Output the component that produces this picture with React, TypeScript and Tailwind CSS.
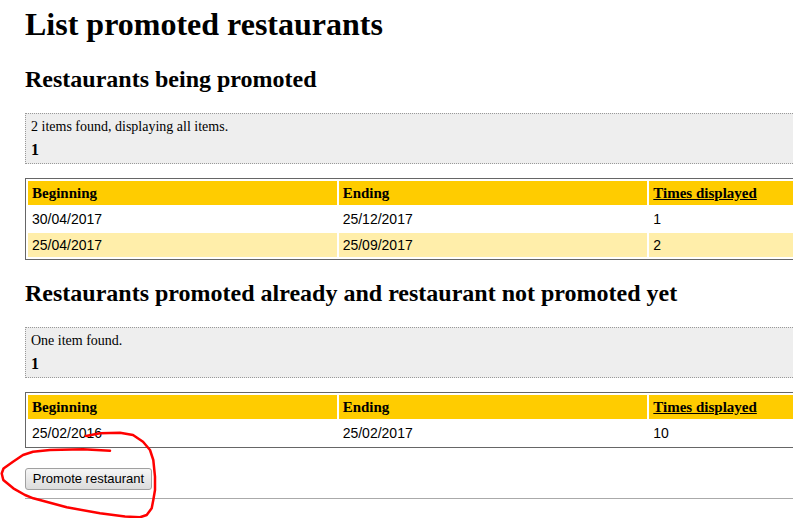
const serif = { fontFamily: '"Liberation Serif", "Times New Roman", serif' };

const promoted = [
  { beginning: "30/04/2017", ending: "25/12/2017", times: 1 },
  { beginning: "25/04/2017", ending: "25/09/2017", times: 2 },
];

const others = [{ beginning: "25/02/2016", ending: "25/02/2017", times: 10 }];

const circle = [
  [110, 450.7], [83, 449.3], [50, 450], [33, 451.7], [23, 455], [13, 461.7], [3.5, 468.5],
  [1.7, 473.5], [3.3, 480], [13.3, 488.3], [25, 495], [33.3, 498.3], [66.7, 507.3],
  [100, 513.3], [125, 516.5], [140, 517.3], [146.7, 515], [151.7, 508.3], [153.3, 500],
  [155, 490], [155, 476.7], [153.3, 460], [150, 450], [143, 441.7], [133, 435],
  [120, 432.7], [100, 433.3], [86, 436],
];

function Pager({ text }: { text: string }) {
  return (
    <div className="mt-[20px] h-[51px] border border-dotted border-[#999] bg-[#eeeeee] pl-[5px] pt-[4px] text-black">
      <p className="text-[14px] leading-[18px]">{text}</p>
      <p className="mt-[5px] text-[16px] font-bold leading-[18px]">1</p>
    </div>
  );
}

function PromoTable({ rows }: { rows: typeof promoted }) {
  return (
    <table className="mt-[14px] w-[936px] table-fixed border-separate border-spacing-[2px] border border-[#666]">
      <thead>
        <tr className="h-[24px]">
          <th className="w-[308px] bg-[#ffcc00] px-[4px] py-0 text-left text-[15px] font-bold" style={serif}>Beginning</th>
          <th className="w-[308px] bg-[#ffcc00] px-[4px] py-0 text-left text-[15px] font-bold" style={serif}>Ending</th>
          <th className="w-[308px] bg-[#ffcc00] px-[4px] py-0 text-left text-[15px] font-bold" style={serif}>
            <a className="text-black underline">Times displayed</a>
          </th>
        </tr>
      </thead>
      <tbody className="font-['Liberation_Sans',Arial,sans-serif] text-[14px]">
        {rows.map((r, i) => (
          <tr key={r.beginning} className={`h-[24px] ${i % 2 === 1 ? "bg-[#ffeeaa]" : "bg-white"}`}>
            <td className="px-[4px] py-0">{r.beginning}</td>
            <td className="px-[4px] py-0">{r.ending}</td>
            <td className="px-[4px] py-0">{r.times}</td>
          </tr>
        ))}
      </tbody>
    </table>
  );
}

export default function App() {
  const d = circle.map((p, i) => `${i === 0 ? "M" : "L"}${p[0]} ${p[1]}`).join(" ");

  return (
    <div className="relative h-[518px] w-[793px] overflow-hidden bg-white text-black" style={serif}>
      <div className="w-[961px] pl-[25px] pt-[6px]">
        <h1 className="m-0 text-[32px] font-bold leading-[37px]">List promoted restaurants</h1>

        {/* Current promotions */}
        <h2 className="mt-[23px] text-[24px] font-bold leading-[27px]">Restaurants being promoted</h2>
        <Pager text="2 items found, displaying all items." />
        <PromoTable rows={promoted} />

        {/* Past / pending */}
        <h2 className="mt-[20px] text-[24px] font-bold leading-[27px]">
          Restaurants promoted already and restaurant not promoted yet
        </h2>
        <Pager text="One item found." />
        <PromoTable rows={others} />

        <button className="mt-[20px] block h-[22px] w-[127px] rounded-[3px] border border-[#a0a0a0] bg-gradient-to-b from-[#f6f6f6] to-[#dcdcdc] text-[13px] font-['Liberation_Sans',Arial,sans-serif] text-black">
          Promote restaurant
        </button>
        <hr className="mt-[8px] border-t border-[#aaaaaa]" />
      </div>

      {/* hand-drawn annotation */}
      <svg className="pointer-events-none absolute left-0 top-0" width="793" height="518">
        <path d={d} fill="none" stroke="#ff0000" strokeWidth="2.5" strokeLinecap="round" strokeLinejoin="round" />
      </svg>
    </div>
  );
}
